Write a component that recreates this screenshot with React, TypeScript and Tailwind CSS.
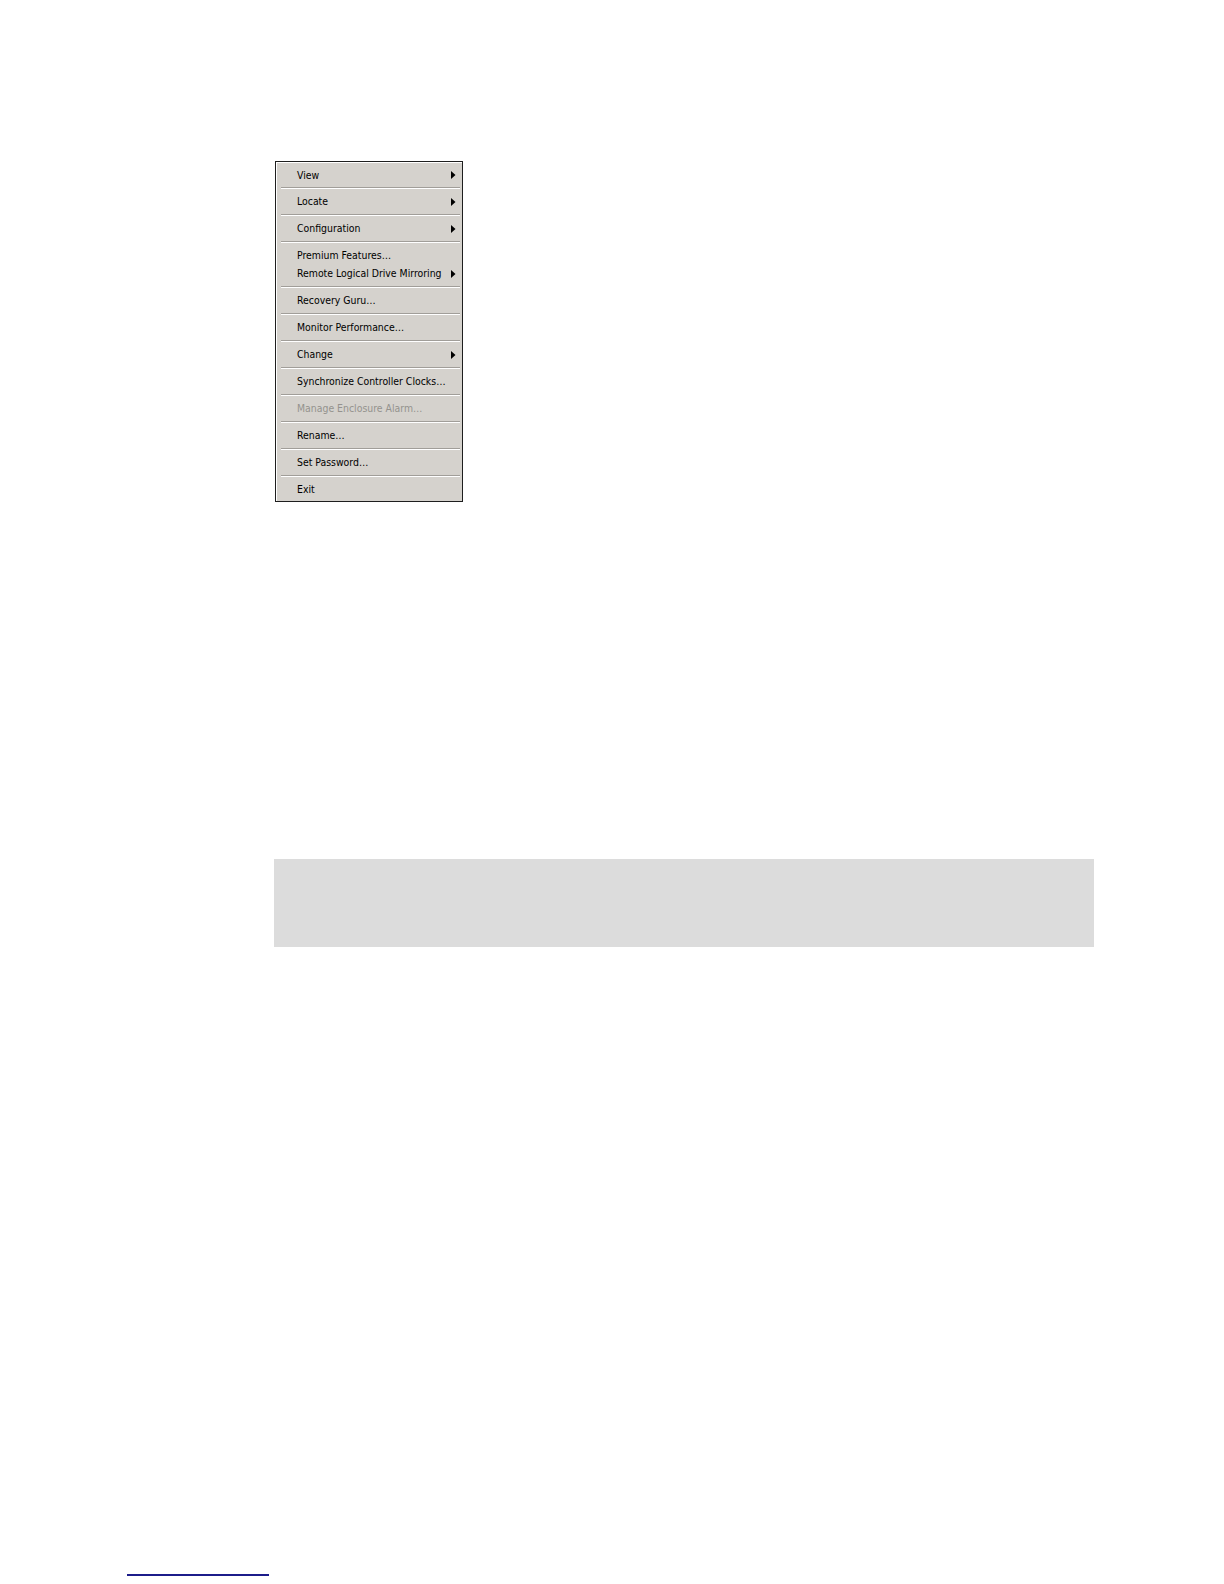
import React from "react";

const Arrow = () => (
  <svg width="5" height="8" viewBox="0 0 5 8" className="absolute right-[6px] top-1/2 -translate-y-1/2">
    <polygon points="0,0 4.5,4 0,8" fill="#000" />
  </svg>
);

const Sep = () => (
  <div className="ml-[4px] mr-[2px] h-[2px] flex flex-col">
    <div className="h-px bg-[#a19e99]" />
    <div className="h-px bg-[#ffffff]" />
  </div>
);

const Row = ({ label, arrow, disabled, h }: { label: string; arrow?: boolean; disabled?: boolean; h: string }) => (
  <div className={`relative flex items-center pl-[20px] ${h}`}>
    <span className={disabled ? "text-[#94928e]" : "text-[#000000]"}>{label}</span>
    {arrow && <Arrow />}
  </div>
);

export default function App() {
  return (
    <div className="relative w-[1224px] h-[1584px] bg-white overflow-hidden">
      <div className="pt-[161px] pl-[275px]">
        <div
          className="w-[188px] h-[341px] border border-[#1e1e1e] bg-[#d5d2cd] text-[10.4px] leading-none"
          style={{ fontFamily: '"DejaVu Sans Condensed", "Liberation Sans", Arial, sans-serif' }}
        >
          <div className="h-full border-l border-t border-[#ffffff] flex flex-col">
            <Row label="View" arrow h="h-[24px]" />
            <Sep />
            <Row label="Locate" arrow h="h-[25px]" />
            <Sep />
            <Row label="Configuration" arrow h="h-[25px]" />
            <Sep />
            <div className="flex flex-col py-[3.5px]">
              <Row label="Premium Features…" h="h-[18px]" />
              <Row label="Remote Logical Drive Mirroring" arrow h="h-[18px]" />
            </div>
            <Sep />
            <Row label="Recovery Guru…" h="h-[25px]" />
            <Sep />
            <Row label="Monitor Performance…" h="h-[25px]" />
            <Sep />
            <Row label="Change" arrow h="h-[25px]" />
            <Sep />
            <Row label="Synchronize Controller Clocks…" h="h-[25px]" />
            <Sep />
            <Row label="Manage Enclosure Alarm…" disabled h="h-[25px]" />
            <Sep />
            <Row label="Rename…" h="h-[25px]" />
            <Sep />
            <Row label="Set Password…" h="h-[25px]" />
            <Sep />
            <Row label="Exit" h="flex-1" />
          </div>
        </div>
      </div>
      <div className="ml-[274px] mt-[357px] w-[820px] h-[88px] bg-[#dcdcdc]" />
      <div className="ml-[127px] mt-[627px] w-[142px] h-[2px] bg-[#1c1c8a]" />
    </div>
  );
}
